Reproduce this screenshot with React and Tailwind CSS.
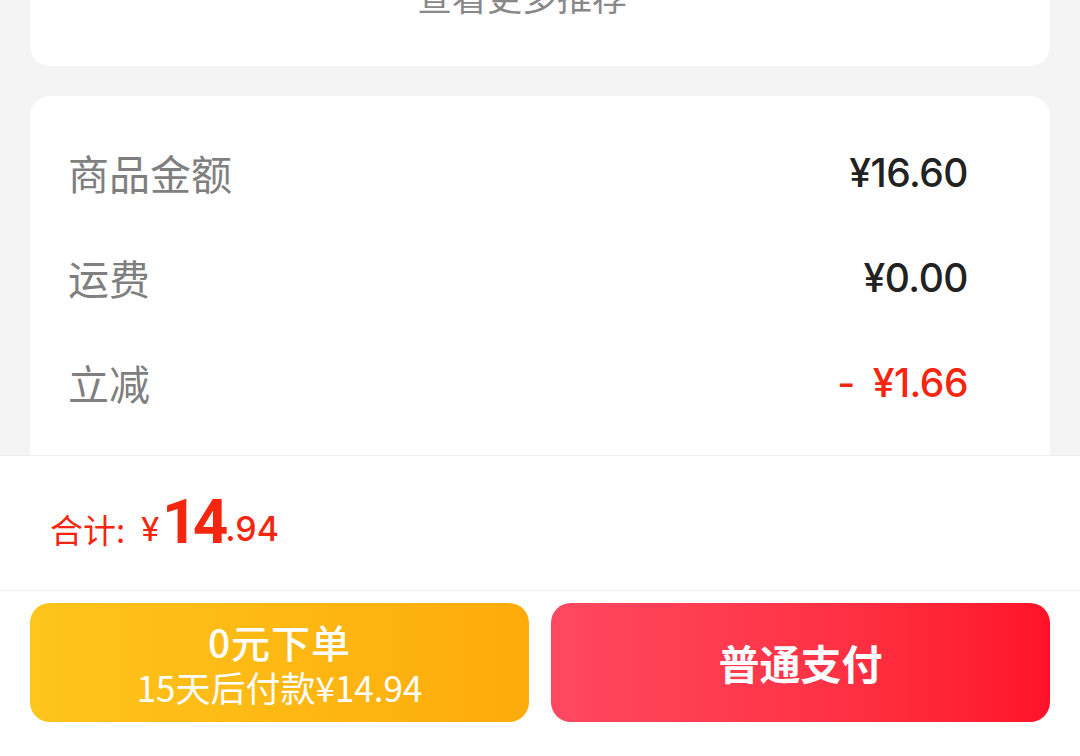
export default function App() {
  const rows = [
    { label: '商品金额', value: '¥16.60', red: false },
    { label: '运费', value: '¥0.00', red: false },
    { label: '立减', value: '¥1.66', red: true },
  ];

  return (
    <div
      className="relative w-[1080px] h-[756px] overflow-hidden bg-[#f4f4f4]"
      style={{ fontFamily: '"Noto Sans CJK SC", "Noto Sans", sans-serif' }}
    >
      <div className="px-[30px]">
        {/* recommendation card, cut off at the top */}
        <div className="h-[66px] bg-white rounded-b-[20px] flex justify-center">
          <span className="mt-[-22px] ml-[-36px] text-[35px] leading-none text-[#888]">查看更多推荐</span>
        </div>

        {/* price summary card */}
        <div className="mt-[30px] bg-white rounded-[20px] pt-[24px] pb-[40px] pl-[38px] pr-[82px]">
          {rows.map((r) => (
            <div key={r.label} className="h-[105px] flex items-center justify-between">
              <span className="text-[41px] leading-none text-[#7f7f7f]">{r.label}</span>
              <span
                className={`flex items-center text-[39px] leading-none tracking-[-0.5px] ${r.red ? 'text-[#f5260f]' : 'text-[#222]'}`}
                style={{ fontFamily: 'Inter, Roboto, sans-serif', fontWeight: 500 }}
              >
                {r.red && <span className="mr-[18px]">-</span>}
                {r.value}
              </span>
            </div>
          ))}
        </div>
      </div>

      {/* bottom bar */}
      <div className="absolute left-0 right-0 bottom-0 bg-white">
        <div className="h-[135px] border-t border-[#efefef] flex items-center pl-[50px] pt-[12px] text-[#f5260f]">
          <span className="text-[33px] leading-none">合计:</span>
          <span className="text-[34px] leading-none ml-[16px]" style={{ fontFamily: 'Roboto, sans-serif' }}>¥</span>
          <span className="text-[62px] leading-none font-bold tracking-[-5px] ml-[3px] mt-[-14px]" style={{ fontFamily: 'Roboto, sans-serif' }}>14</span>
          <span className="text-[34px] leading-none ml-[2px]" style={{ fontFamily: 'Inter, Roboto, sans-serif', fontWeight: 500 }}>.94</span>
        </div>
        <div className="border-t border-[#efefef] px-[30px] pt-[12px] pb-[34px] flex gap-[22px]">
          <button className="flex-1 h-[119px] rounded-[20px] bg-gradient-to-r from-[#fec51b] to-[#fdab0a] flex flex-col items-center justify-center gap-[8px] text-white">
            <span className="text-[39px] leading-none font-medium tracking-[1px]">0元下单</span>
            <span className="text-[35px] leading-none">15天后付款¥14.94</span>
          </button>
          <button className="flex-1 h-[119px] rounded-[20px] bg-gradient-to-r from-[#ff4860] to-[#ff1228] flex items-center justify-center text-white">
            <span className="text-[41px] leading-none font-semibold">普通支付</span>
          </button>
        </div>
      </div>
    </div>
  );
}
